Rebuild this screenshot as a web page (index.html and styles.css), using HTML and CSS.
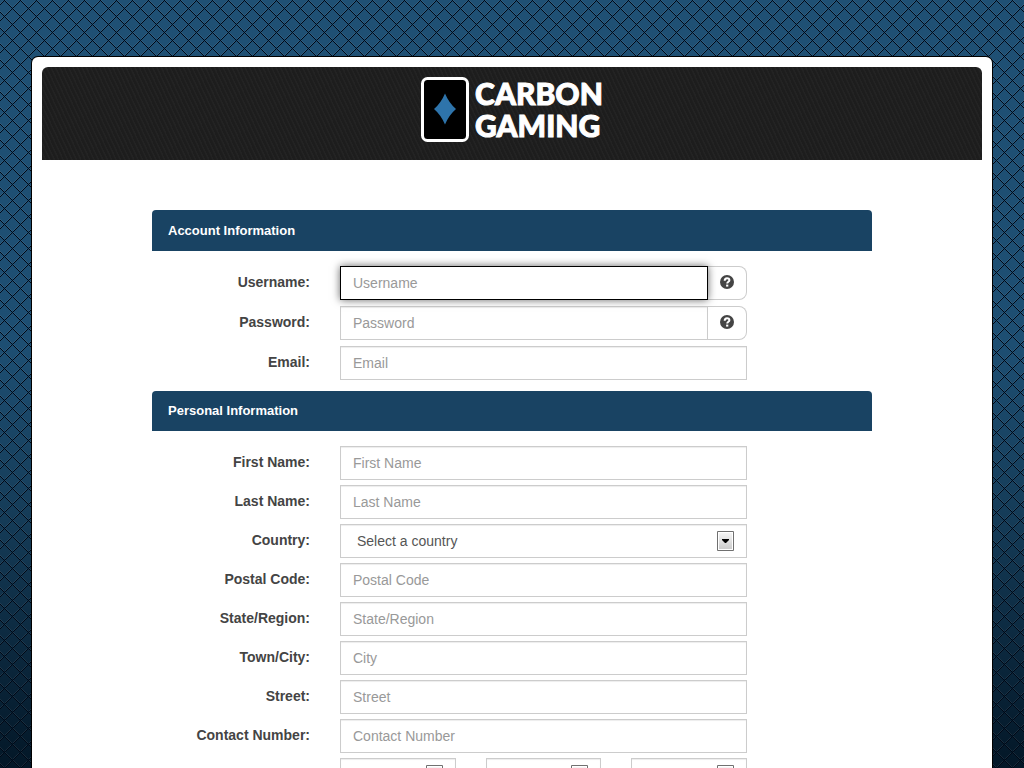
FILE: index.html
```html
<!DOCTYPE html>
<html lang="en">
<head>
  <meta charset="UTF-8">
  <meta name="viewport" content="width=device-width, initial-scale=1">
  <title>Carbon Gaming</title>
  <link rel="stylesheet" href="styles.css">
</head>
<body>
  <div class="page">
    <header class="header">
      <a href="#" class="logo">
        <svg class="logo-card" width="48" height="66" viewBox="0 0 48 66" aria-hidden="true">
          <rect x="1.500" y="2.500" width="45" height="62" rx="5" fill="#000" stroke="#fff" stroke-width="3"/>
          <path d="M24 17.500Q28 27 35 33Q28 39 24 48.500Q20 39 13 33Q20 27 24 17.500Z" fill="#2e74ab"/>
        </svg>
        <span class="logo-text">CARBON<br>GAMING</span>
      </a>
    </header>
    <main>
      <form class="signup">
        <section class="group account">
          <h2 class="group-title">Account Information</h2>
          <div class="rows">
            <div class="row">
              <label for="username">Username:</label>
              <div class="input-group">
                <input class="control" type="text" id="username" placeholder="Username" autofocus>
                <button type="button" class="help" aria-label="Username help">
                  <svg width="14" height="14" viewBox="0 0 14 14" aria-hidden="true">
                    <circle cx="7" cy="7" r="7" fill="#444"/>
                    <path d="M4.700 5.700C4.700 2.300 9.400 2.500 9.400 5.200C9.400 6.800 7.200 6.700 7.200 8.600" fill="none" stroke="#fff" stroke-width="2"/>
                    <path d="M6.100 9.600h2.200v2H6.100z" fill="#fff"/>
                  </svg>
                </button>
              </div>
            </div>
            <div class="row">
              <label for="password">Password:</label>
              <div class="input-group">
                <input class="control" type="password" id="password" placeholder="Password">
                <button type="button" class="help" aria-label="Password help">
                  <svg width="14" height="14" viewBox="0 0 14 14" aria-hidden="true">
                    <circle cx="7" cy="7" r="7" fill="#444"/>
                    <path d="M4.700 5.700C4.700 2.300 9.400 2.500 9.400 5.200C9.400 6.800 7.200 6.700 7.200 8.600" fill="none" stroke="#fff" stroke-width="2"/>
                    <path d="M6.100 9.600h2.200v2H6.100z" fill="#fff"/>
                  </svg>
                </button>
              </div>
            </div>
            <div class="row">
              <label for="email">Email:</label>
              <input class="control" type="email" id="email" placeholder="Email">
            </div>
          </div>
        </section>
        <section class="group personal">
          <h2 class="group-title">Personal Information</h2>
          <div class="rows">
            <div class="row">
              <label for="first-name">First Name:</label>
              <input class="control" type="text" id="first-name" placeholder="First Name">
            </div>
            <div class="row">
              <label for="last-name">Last Name:</label>
              <input class="control" type="text" id="last-name" placeholder="Last Name">
            </div>
            <div class="row">
              <label for="country">Country:</label>
              <select class="control" id="country">
                <option>Select a country</option>
              </select>
            </div>
            <div class="row">
              <label for="postal-code">Postal Code:</label>
              <input class="control" type="text" id="postal-code" placeholder="Postal Code">
            </div>
            <div class="row">
              <label for="state">State/Region:</label>
              <input class="control" type="text" id="state" placeholder="State/Region">
            </div>
            <div class="row">
              <label for="city">Town/City:</label>
              <input class="control" type="text" id="city" placeholder="City">
            </div>
            <div class="row">
              <label for="street">Street:</label>
              <input class="control" type="text" id="street" placeholder="Street">
            </div>
            <div class="row">
              <label for="phone">Contact Number:</label>
              <input class="control" type="tel" id="phone" placeholder="Contact Number">
            </div>
            <div class="row">
              <div class="date">
                <select class="control" aria-label="Day"><option></option></select>
                <select class="control" aria-label="Month"><option></option></select>
                <select class="control" aria-label="Year"><option></option></select>
              </div>
            </div>
          </div>
        </section>
      </form>
    </main>
  </div>
</body>
</html>
```

FILE: styles.css
```css
:root {
  --blue: #194363;
  --border: #ccc;
  --text: #444;
}
* { margin: 0; padding: 0; box-sizing: border-box; }
html { background: #031522; }
body {
  font-family: "Liberation Sans", Arial, sans-serif;
  font-size: 14px;
  line-height: 20px;
  color: var(--text);
  min-height: 100vh;
  padding: 57px 32px 0;
  /* diamond mesh over a blue fade */
  background-image:
    url("data:image/svg+xml,%3Csvg xmlns='http://www.w3.org/2000/svg' width='16' height='16' shape-rendering='crispEdges'%3E%3Cpath stroke='%23fff' stroke-opacity='.08' d='M5 .500h1M6 1.500h1M7 2.500h1M8 3.500h1M9 4.500h1M10 5.500h1M11 6.500h1M13 8.500h1M14 9.500h1M15 10.500h1M0 11.500h1M1 12.500h1M2 13.500h1M3 14.500h1M2 1.500h1M1 2.500h1M0 3.500h1M15 4.500h1M14 5.500h1M13 6.500h1M10 9.500h1M9 10.500h1M8 11.500h1M7 12.500h1M6 13.500h1M5 14.500h1'/%3E%3Cpath stroke='%23000816' d='M4 .500h1M5 1.500h1M6 2.500h1M7 3.500h1M8 4.500h1M9 5.500h1M10 6.500h1M11 7.500h1M12 8.500h1M13 9.500h1M14 10.500h1M15 11.500h1M0 12.500h1M1 13.500h1M2 14.500h1M3 15.500h1M3 1.500h1M2 2.500h1M1 3.500h1M0 4.500h1M15 5.500h1M14 6.500h1M13 7.500h1M11 9.500h1M10 10.500h1M9 11.500h1M8 12.500h1M7 13.500h1M6 14.500h1M5 15.500h1'/%3E%3C/svg%3E"),
    linear-gradient(#1f5074, #1d4e72 45%, #163e5b 65%, #031727);
  background-attachment: fixed;
}
.page {
  max-width: 960px;
  margin: 0 auto;
  padding: 10px;
  background: #fff;
  border-radius: 6px 6px 0 0;
  box-shadow: 0 0 0 1px #000;
}
.header {
  display: flex;
  justify-content: center;
  padding: 9px 0 18px;
  border-radius: 6px 6px 0 0;
  background: repeating-linear-gradient(65deg, #1d1d1d 0, #1d1d1d 2px, #232323 3px, #232323 4px);
}
.logo { display: flex; gap: 6px; color: #fff; text-decoration: none; }
.logo-card { display: block; }
.logo-text {
  font-family: Lato, sans-serif;
  font-size: 30px;
  font-weight: 900;
  line-height: 32px;
  padding-top: 1px;
  -webkit-text-stroke: 1px #fff;
}
.signup { max-width: 720px; margin: 50px auto 0; padding-bottom: 40px; }
.group-title {
  padding: 10px 16px;
  border-radius: 4px 4px 0 0;
  background: var(--blue);
  color: #fff;
  font-size: 13px;
  line-height: 20px;
}
.rows { display: grid; gap: 5px; padding-top: 15px; }
.account { margin-bottom: 11px; }
.account .group-title { padding-top: 11px; }
.account .rows { gap: 6px; }
.row { display: grid; grid-template-columns: 158fr 407fr 95fr; column-gap: 30px; }
.row label { padding-top: 6px; text-align: right; font-weight: bold; }
.control {
  width: 100%;
  min-width: 0;
  height: 34px;
  padding: 6px 12px;
  border: 1px solid var(--border);
  background: #fff;
  box-shadow: inset 0 1px 1px rgba(0,0,0,0.075);
  color: #555;
  font: inherit;
}
.control::placeholder { color: #999; opacity: 1; }
.control:focus {
  position: relative;
  outline: none;
  border-color: #000;
  box-shadow: 0 0 8px rgba(0,0,0,0.6);
  caret-color: transparent;
}
select.control {
  appearance: none;
  padding: 6px 40px 6px 16px;
  background: #fff url("data:image/svg+xml,%3Csvg xmlns='http://www.w3.org/2000/svg' width='17' height='20'%3E%3ClinearGradient id='g' x2='0' y2='1'%3E%3Cstop stop-color='%23f4f4f4'/%3E%3Cstop offset='1' stop-color='%23ccc'/%3E%3C/linearGradient%3E%3Cpath fill='%23fff' stroke='%23707070' d='M.5.5h16v19H.5z'/%3E%3Cpath fill='url(%23g)' d='M2 2h13v16H2z'/%3E%3Cpath d='M5 8h7v1l-3 3H8L5 9z'/%3E%3C/svg%3E") no-repeat right 12px center;
}
.input-group { display: flex; }
.input-group .control { flex: 1; }
.help {
  display: flex;
  align-items: center;
  justify-content: center;
  width: 39px;
  height: 34px;
  padding-bottom: 2px;
  border: 1px solid var(--border);
  border-left: 0;
  border-radius: 0 8px 8px 0;
  background: #fff;
  cursor: pointer;
}
.date { grid-column: 2; display: grid; grid-template-columns: repeat(3, 1fr); gap: 30px; }
```
